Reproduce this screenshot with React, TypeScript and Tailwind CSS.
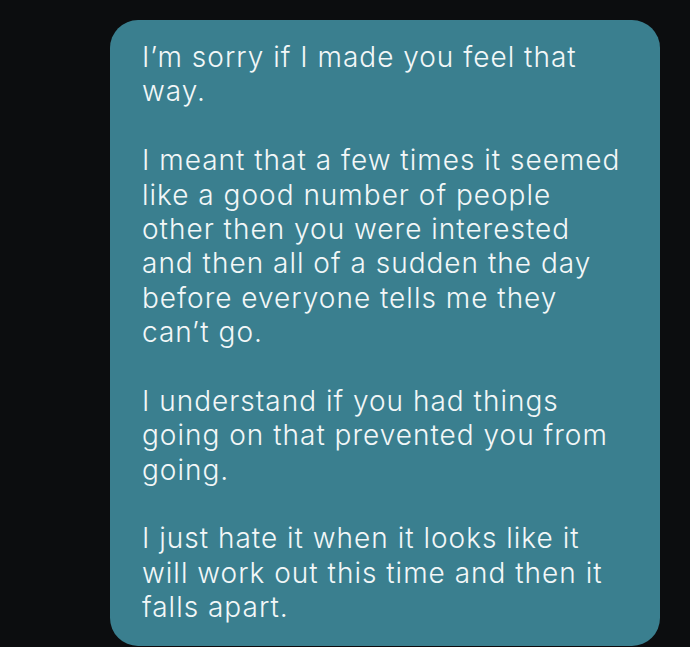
import React from "react";

const lines = [
  "I’m sorry if I made you feel that",
  "way.",
  "",
  "I meant that a few times it seemed",
  "like a good number of people",
  "other then you were interested",
  "and then all of a sudden the day",
  "before everyone tells me they",
  "can’t go.",
  "",
  "I understand if you had things",
  "going on that prevented you from",
  "going.",
  "",
  "I just hate it when it looks like it",
  "will work out this time and then it",
  "falls apart.",
];

export default function App() {
  return (
    <div className="min-h-screen w-full bg-[#0c0d0f] pt-[20px] pl-[110px]">
      <div
        className="w-[550px] rounded-[28px] bg-[#3a7f8f] pl-[32px] pt-[20px] pb-[21px] text-[28px] font-light leading-[34.4px] tracking-[1px] text-[#f2f7f8]"
        style={{ fontFamily: "Inter, 'Noto Sans', sans-serif" }}
      >
        {lines.map((l, i) => (
          <div key={i} className="whitespace-nowrap h-[34.4px]">
            {l}
          </div>
        ))}
      </div>
    </div>
  );
}
